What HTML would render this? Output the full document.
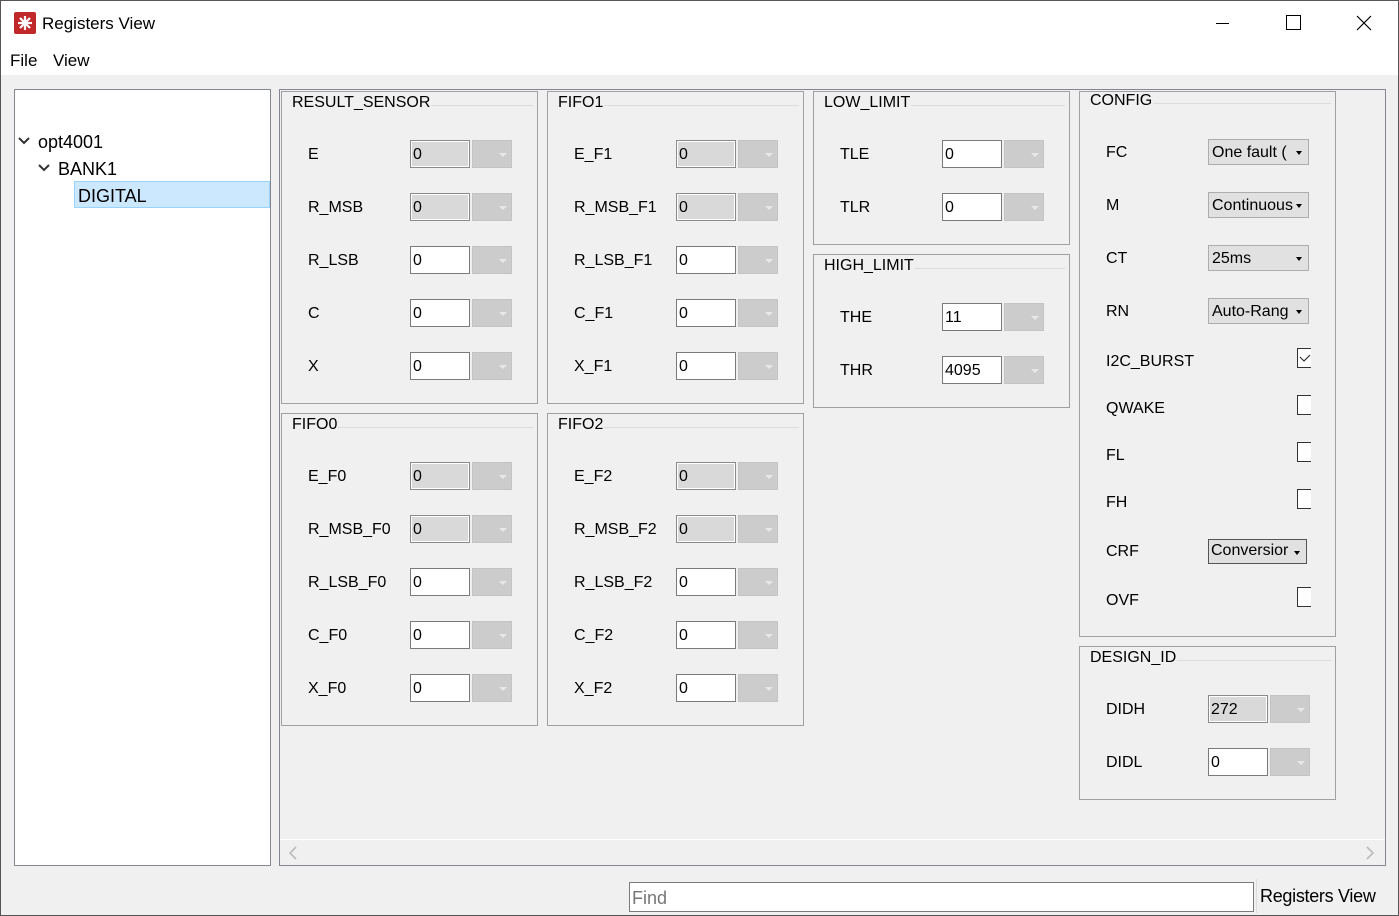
<!DOCTYPE html>
<html><head><meta charset="utf-8"><style>
*{box-sizing:border-box;margin:0;padding:0}
body{width:1399px;height:916px;background:#f0f0f0;font-family:"Liberation Sans",Arial,sans-serif;font-size:16px;color:#000;position:relative;overflow:hidden}
.a{position:absolute}
.g{position:absolute;border:1px solid #a0a0a0;width:257px}
.g .lg{position:absolute;left:9px;top:1px;right:4px;height:13px;border-bottom:1px solid #dcdcdc}
.g .lg span{background:#f0f0f0;padding:0 1px;position:relative;top:1px}
.r{position:absolute;left:0;width:100%;height:28px}
.r .l{position:absolute;left:26px;top:6px}
.r .t{position:absolute;left:128px;top:0;width:60px;height:28px;border:1px solid #7a7a7a;background:#fff;padding:6px 2px;line-height:16px}
.r .t.x{background:#d9d9d9;border:1px solid #8a8a8a;box-shadow:inset 0 0 0 1px #fff}
.r .d{position:absolute;left:190px;top:0;width:40px;height:28px;background:#cccccc;border:1px solid #c4c4c4}
.r .d:after{content:"";position:absolute;left:26px;top:12px;border-left:4px solid transparent;border-right:4px solid transparent;border-top:4px solid #e8e8e8}
.c{position:absolute;left:128px;top:0;width:101px;height:26px;background:#e1e1e1;border:1px solid #adadad;padding:4px 3px;line-height:18px;white-space:nowrap;overflow:hidden}
.c:after{content:"";position:absolute;right:6px;top:11px;border-left:3.5px solid transparent;border-right:3.5px solid transparent;border-top:4px solid #000}
.cb{position:absolute;left:217px;top:-3px;width:14px;height:20px;border:1px solid #333;border-right:none;background:#fff}
</style></head><body>
<div class="a" style="left:0;top:0;width:1399px;height:75px;background:#fff"></div>
<svg class="a" style="left:14px;top:12px" width="22" height="22"><rect x="0" y="0" width="22" height="22" rx="2" fill="#c0282a"/><g stroke="#fff" stroke-width="2.2"><line x1="11" y1="4" x2="11" y2="18"/><line x1="4" y1="11" x2="18" y2="11"/><line x1="6" y1="6" x2="16" y2="16"/><line x1="16" y1="6" x2="6" y2="16"/></g></svg>
<div class="a" style="left:42px;top:14px;font-size:17px">Registers View</div>
<div class="a" style="left:1216px;top:23px;width:13px;height:1px;background:#000"></div>
<div class="a" style="left:1286px;top:15px;width:15px;height:15px;border:1px solid #000"></div>
<svg class="a" style="left:1356px;top:15px" width="16" height="16"><path d="M1 1L15 15M15 1L1 15" stroke="#000" stroke-width="1.2"/></svg>
<div class="a" style="left:10px;top:51px;font-size:17px">File</div>
<div class="a" style="left:53px;top:51px;font-size:17px">View</div>
<div class="a" style="left:14px;top:89px;width:257px;height:777px;background:#fff;border:1px solid #828790"></div>
<svg class="a" style="left:18px;top:136px" width="12" height="10"><path d="M1 2L6 7L11 2" stroke="#333" stroke-width="2" fill="none"/></svg>
<div class="a" style="left:38px;top:132px;font-size:18px">opt4001</div>
<svg class="a" style="left:38px;top:163px" width="12" height="10"><path d="M1 2L6 7L11 2" stroke="#333" stroke-width="2" fill="none"/></svg>
<div class="a" style="left:58px;top:159px;font-size:18px">BANK1</div>
<div class="a" style="left:74px;top:181px;width:196px;height:27px;background:#cce8ff;border:1px solid #99d1ff"></div>
<div class="a" style="left:78px;top:186px;font-size:18px">DIGITAL</div>
<div class="a" style="left:279px;top:89px;width:1107px;height:777px;border:1px solid #828790"></div>
<div class="a" style="left:280px;top:839px;width:1105px;height:1px;background:#fff"></div>
<svg class="a" style="left:288px;top:846px" width="10" height="14"><path d="M8 1L2 7L8 13" stroke="#bbb" stroke-width="1.6" fill="none"/></svg>
<svg class="a" style="left:1365px;top:846px" width="10" height="14"><path d="M2 1L8 7L2 13" stroke="#bbb" stroke-width="1.6" fill="none"/></svg>

<div class="g" style="left:281px;top:91px;height:313px"><div class="lg"><span>RESULT_SENSOR</span></div>
<div class="r" style="top:48px"><span class="l">E</span><div class="t x">0</div><div class="d"></div></div>
<div class="r" style="top:101px"><span class="l">R_MSB</span><div class="t x">0</div><div class="d"></div></div>
<div class="r" style="top:154px"><span class="l">R_LSB</span><div class="t">0</div><div class="d"></div></div>
<div class="r" style="top:207px"><span class="l">C</span><div class="t">0</div><div class="d"></div></div>
<div class="r" style="top:260px"><span class="l">X</span><div class="t">0</div><div class="d"></div></div></div>

<div class="g" style="left:547px;top:91px;height:313px"><div class="lg"><span>FIFO1</span></div>
<div class="r" style="top:48px"><span class="l">E_F1</span><div class="t x">0</div><div class="d"></div></div>
<div class="r" style="top:101px"><span class="l">R_MSB_F1</span><div class="t x">0</div><div class="d"></div></div>
<div class="r" style="top:154px"><span class="l">R_LSB_F1</span><div class="t">0</div><div class="d"></div></div>
<div class="r" style="top:207px"><span class="l">C_F1</span><div class="t">0</div><div class="d"></div></div>
<div class="r" style="top:260px"><span class="l">X_F1</span><div class="t">0</div><div class="d"></div></div></div>

<div class="g" style="left:281px;top:413px;height:313px"><div class="lg"><span>FIFO0</span></div>
<div class="r" style="top:48px"><span class="l">E_F0</span><div class="t x">0</div><div class="d"></div></div>
<div class="r" style="top:101px"><span class="l">R_MSB_F0</span><div class="t x">0</div><div class="d"></div></div>
<div class="r" style="top:154px"><span class="l">R_LSB_F0</span><div class="t">0</div><div class="d"></div></div>
<div class="r" style="top:207px"><span class="l">C_F0</span><div class="t">0</div><div class="d"></div></div>
<div class="r" style="top:260px"><span class="l">X_F0</span><div class="t">0</div><div class="d"></div></div></div>

<div class="g" style="left:547px;top:413px;height:313px"><div class="lg"><span>FIFO2</span></div>
<div class="r" style="top:48px"><span class="l">E_F2</span><div class="t x">0</div><div class="d"></div></div>
<div class="r" style="top:101px"><span class="l">R_MSB_F2</span><div class="t x">0</div><div class="d"></div></div>
<div class="r" style="top:154px"><span class="l">R_LSB_F2</span><div class="t">0</div><div class="d"></div></div>
<div class="r" style="top:207px"><span class="l">C_F2</span><div class="t">0</div><div class="d"></div></div>
<div class="r" style="top:260px"><span class="l">X_F2</span><div class="t">0</div><div class="d"></div></div></div>

<div class="g" style="left:813px;top:91px;height:154px"><div class="lg"><span>LOW_LIMIT</span></div>
<div class="r" style="top:48px"><span class="l">TLE</span><div class="t">0</div><div class="d"></div></div>
<div class="r" style="top:101px"><span class="l">TLR</span><div class="t">0</div><div class="d"></div></div></div>

<div class="g" style="left:813px;top:254px;height:154px"><div class="lg"><span>HIGH_LIMIT</span></div>
<div class="r" style="top:48px"><span class="l">THE</span><div class="t">11</div><div class="d"></div></div>
<div class="r" style="top:101px"><span class="l">THR</span><div class="t">4095</div><div class="d"></div></div></div>

<div class="g" style="left:1079px;top:91px;height:546px"><div class="lg" style="top:-1px"><span>CONFIG</span></div>
<div class="r" style="top:47px"><span class="l" style="top:5px">FC</span><div class="c">One fault (</div></div>
<div class="r" style="top:100px"><span class="l" style="top:5px">M</span><div class="c">Continuous</div></div>
<div class="r" style="top:153px"><span class="l" style="top:5px">CT</span><div class="c">25ms</div></div>
<div class="r" style="top:206px"><span class="l" style="top:5px">RN</span><div class="c">Auto-Rang</div></div>
<div class="r" style="top:259px"><span class="l" style="top:2px">I2C_BURST</span><div class="cb"><svg width="14" height="18"><path d="M2 8L6 12L12 6" stroke="#333" stroke-width="1.2" fill="none"/></svg></div></div>
<div class="r" style="top:306px"><span class="l" style="top:2px">QWAKE</span><div class="cb"></div></div>
<div class="r" style="top:353px"><span class="l" style="top:2px">FL</span><div class="cb"></div></div>
<div class="r" style="top:400px"><span class="l" style="top:2px">FH</span><div class="cb"></div></div>
<div class="r" style="top:447px"><span class="l" style="top:4px">CRF</span><div class="c" style="border:1px solid #555;background:#e1e1e1;width:99px;height:25px;padding:2px 2px">Conversior</div></div>
<div class="r" style="top:498px"><span class="l" style="top:2px">OVF</span><div class="cb"></div></div></div>

<div class="g" style="left:1079px;top:646px;height:154px"><div class="lg"><span>DESIGN_ID</span></div>
<div class="r" style="top:48px"><span class="l">DIDH</span><div class="t x">272</div><div class="d"></div></div>
<div class="r" style="top:101px"><span class="l">DIDL</span><div class="t">0</div><div class="d"></div></div></div>

<div class="a" style="left:629px;top:882px;width:625px;height:30px;background:#fff;border:1px solid #7a7a7a;color:#777;font-size:18px;padding:5px 2px">Find</div>
<div class="a" style="left:1256px;top:879px;width:1px;height:34px;background:#ddd"></div>
<div class="a" style="left:1260px;top:886px;font-size:18px;letter-spacing:-0.3px">Registers View</div>
<div class="a" style="left:0;top:0;width:1399px;height:916px;border:1px solid #555;pointer-events:none"></div>
</body></html>
